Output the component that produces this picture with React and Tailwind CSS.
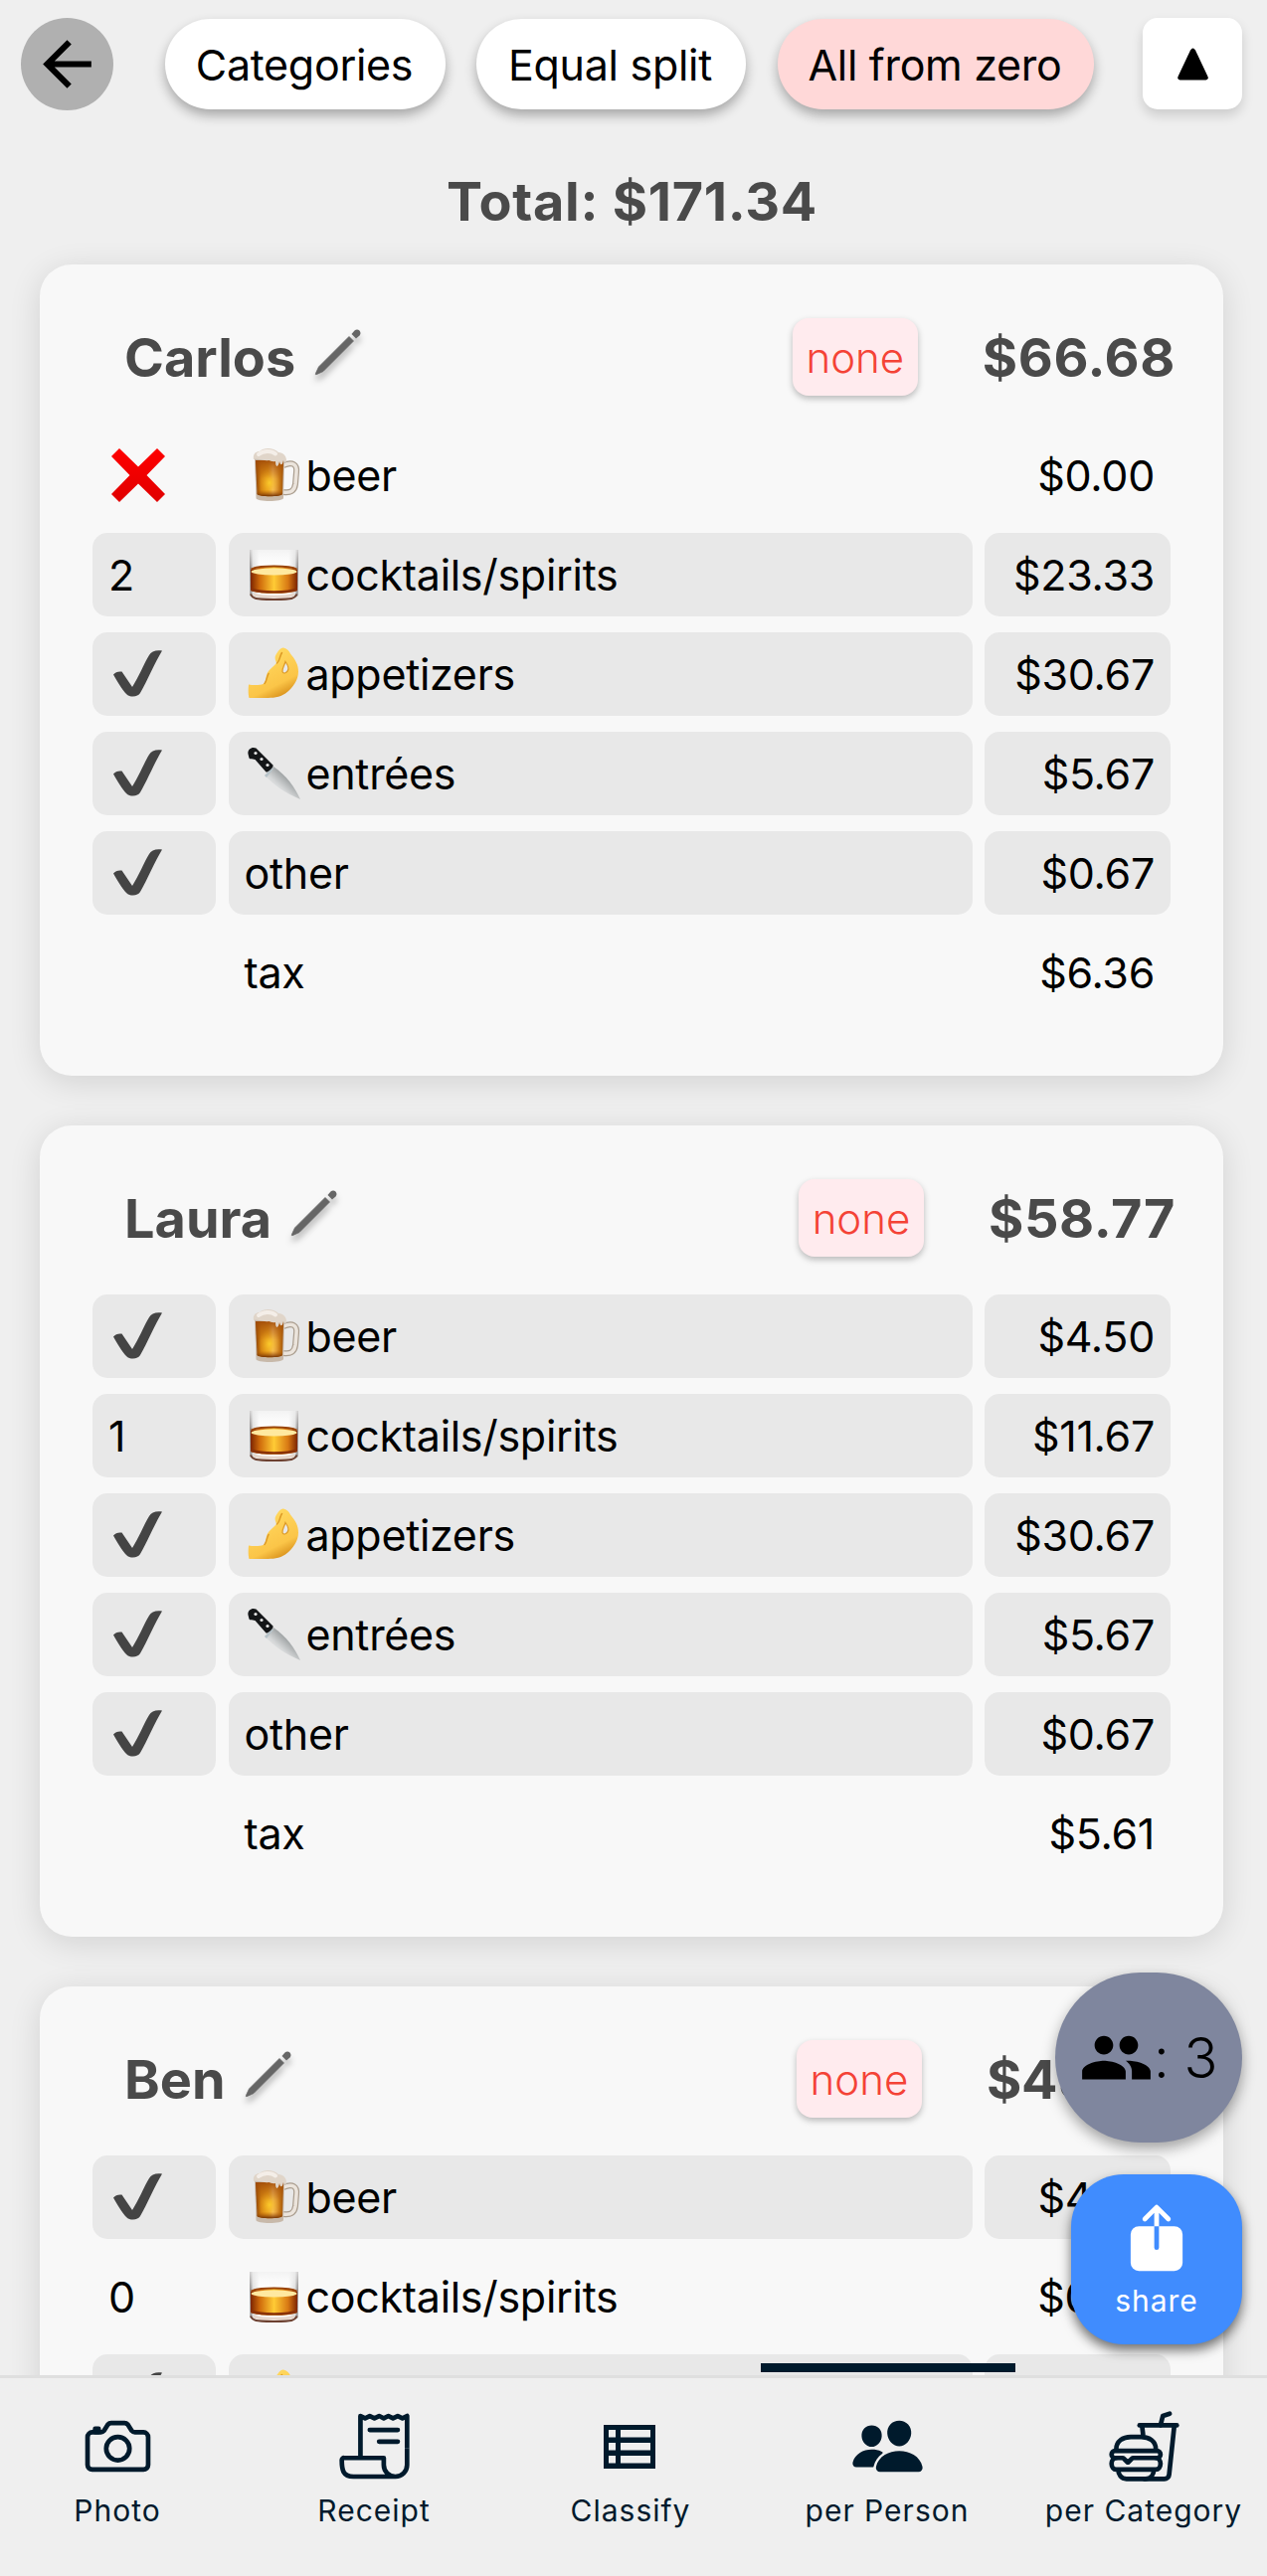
import React from "react";
import { MdArrowBack, MdPeople } from "react-icons/md";
import { IoCameraOutline, IoReceiptOutline, IoPeople, IoFastFoodOutline, IoShare } from "react-icons/io5";

function Beer() {
  return (
    <svg viewBox="0 0 54 54" className="h-[54px] w-[54px]">
      <defs>
        <linearGradient id="beerBody" x1="0" x2="1" y1="0" y2="0">
          <stop offset="0" stopColor="#8a4006" />
          <stop offset=".2" stopColor="#d07f10" />
          <stop offset=".45" stopColor="#e79c1c" />
          <stop offset=".62" stopColor="#f6be68" />
          <stop offset=".85" stopColor="#c97a18" />
          <stop offset="1" stopColor="#a0560c" />
        </linearGradient>
        <radialGradient id="beerGlow" cx=".5" cy=".62" r=".4">
          <stop offset="0" stopColor="#ffd22e" />
          <stop offset="1" stopColor="#f0a51c" stopOpacity="0" />
        </radialGradient>
        <linearGradient id="beerShade" x1="0" x2="0" y1="0" y2="1">
          <stop offset="0" stopColor="#a04a08" stopOpacity=".9" />
          <stop offset=".5" stopColor="#b35d09" stopOpacity=".1" />
          <stop offset=".82" stopColor="#b35d09" stopOpacity="0" />
          <stop offset="1" stopColor="#6a2c04" stopOpacity=".95" />
        </linearGradient>
      </defs>
      <path d="M36 17c9-4 14-1 13 7l-1 12c-1 7-5 9-12 8" fill="none" stroke="#a99c8d" strokeWidth="6" />
      <path d="M36 17c9-4 14-1 13 7l-1 12c-1 7-5 9-12 8" fill="none" stroke="#ebe4dc" strokeWidth="3.600" />
      <path d="M7 10 8.500 50c0 4 27 4 27.500 0L37 10Z" fill="#c8b9aa" />
      <path d="M8 12 9.500 46c1 3 25 3 25.500 0L36 12Z" fill="url(#beerBody)" />
      <path d="M8 12 9.500 46c1 3 25 3 25.500 0L36 12Z" fill="url(#beerGlow)" />
      <path d="M8 12 9.500 46c1 3 25 3 25.500 0L36 12Z" fill="url(#beerShade)" />
      <path d="M6 11C5 6 8 3 12 3c4-4 14-4 19 1 5 0 8 4 8 8 0 3-2 2-3 0-1 5-3 6-4 1-1 6-4 7-4 0-3 1-5-1-7-1-4 1-8-2-15-1Z" fill="#e0d5c9" />
      <path d="M11 6c5-4 13-4 17-.5" fill="none" stroke="#f4eee8" strokeWidth="4" strokeLinecap="round" />
    </svg>
  );
}

function Whisky() {
  return (
    <svg viewBox="0 0 54 54" className="h-[54px] w-[54px]">
      <defs>
        <linearGradient id="whisky" x1="0" x2="1">
          <stop offset="0" stopColor="#7d2500" />
          <stop offset=".2" stopColor="#d06c0c" />
          <stop offset=".5" stopColor="#ffcb35" />
          <stop offset=".8" stopColor="#d87914" />
          <stop offset="1" stopColor="#7d2500" />
        </linearGradient>
        <linearGradient id="glass" x1="0" x2="1">
          <stop offset="0" stopColor="#6f6b6b" />
          <stop offset=".07" stopColor="#dcdcdc" />
          <stop offset=".2" stopColor="#fdfdfd" />
          <stop offset=".8" stopColor="#fdfdfd" />
          <stop offset=".93" stopColor="#dcdcdc" />
          <stop offset="1" stopColor="#6f6b6b" />
        </linearGradient>
        <linearGradient id="glassTop" x1="0" x2="0" y1="0" y2="1">
          <stop offset="0" stopColor="#efefef" stopOpacity=".75" />
          <stop offset=".4" stopColor="#fff" stopOpacity="0" />
        </linearGradient>
      </defs>
      <path d="M2 2h49l-.5 46c-2 5-46 5-48 0Z" fill="url(#glass)" />
      <path d="M2 2h49l-.5 46c-2 5-46 5-48 0Z" fill="url(#glassTop)" />
      <path d="M3 22c9-4 38-4 47 0v21c-7 4-40 4-47 0Z" fill="url(#whisky)" />
      <ellipse cx="26.500" cy="24" rx="23" ry="3.400" fill="#ffe9a0" />
      <path d="M3.500 21.500c7-4 39-4 46 0" fill="none" stroke="#9a4408" strokeWidth="2" />
      <path d="M3.500 41.500c9 4 37 4 46 0" fill="none" stroke="#8a3208" strokeWidth="2.600" />
      <path d="M6 47c9 3 32 3 41 0" fill="none" stroke="#e6d6cb" strokeWidth="3" />
      <path d="M3 46.500c2 5 5 5 23.500 5.500 18-.5 21-.5 23-5.500" fill="none" stroke="#6c4030" strokeWidth="2" />
    </svg>
  );
}

function Hand() {
  return (
    <svg viewBox="0 0 54 54" className="h-[54px] w-[54px]">
      <defs>
        <linearGradient id="skin" x1=".35" x2=".75" y1=".2" y2="1">
          <stop offset="0" stopColor="#ffd65c" />
          <stop offset=".65" stopColor="#fbc548" />
          <stop offset="1" stopColor="#d28713" />
        </linearGradient>
      </defs>
      <path fillRule="evenodd" d="M1 37.500c6 1 12 .5 14.500-.5 3.500-2 2-6 4.500-11.500 1.500-3 6-6 9-9.500-1.500-4-2-6-.5-8.500C30.500 4 33.500 0 36 .5c4 1 6 3.500 7 6 5 6 8 11 8 18 0 8-5 16-13 22-6 4-13 4.500-20 4.500H1.500C.5 48 .5 42 1 37.500ZM38 14.500c-1 4-3.500 7-3 10 1 3 5 1 5.800-2s-.8-5-2.800-8Z" fill="url(#skin)" />
      <path d="M29.500 16c3-2 2.500-7 5-10.500M17 36.500c2-2 2-6 4-10" fill="none" stroke="#dd9a25" strokeWidth="1.500" strokeLinecap="round" />
      <path d="M38 14.500c-1 4-3.500 7-3 10 1 3 5 1 5.800-2s-.8-5-2.800-8Z" fill="none" stroke="#dd9a25" strokeWidth="1.200" />
    </svg>
  );
}

function Knife() {
  return (
    <svg viewBox="0 0 54 54" className="h-[54px] w-[54px]">
      <defs>
        <linearGradient id="blade" x1=".1" x2=".7" y1=".8" y2=".2">
          <stop offset="0" stopColor="#fafafa" />
          <stop offset=".45" stopColor="#d4d6d7" />
          <stop offset="1" stopColor="#858a8b" />
        </linearGradient>
      </defs>
      <path d="M17 29 26 20C39 29 47 40 53 53 38 47 26 38 17 29Z" fill="url(#blade)" />
      <path d="M17 29 24 22 27 21 19 31Z" fill="#b5c2c8" />
      <path d="M.5 7.500C-.5 3 4 -.5 8.500 1.500l17 17c1 2-5 8-7 7L7.500 13c-3-1-5 0-6-1.500Z" fill="#141618" />
      <g fill="#e5e5e5"><circle cx="8" cy="6.500" r="1.600" /><circle cx="14" cy="12.500" r="1.600" /><circle cx="20" cy="18.500" r="1.600" /></g>
    </svg>
  );
}

function Check() {
  return (
    <svg viewBox="0 0 49 47" className="ml-[5px] -mt-[2px] h-[47px] w-[49px]">
      <path d="M0 24.500C2 22 5 21 8.500 21.500L19 37C25 28 31 13 36 5 38 1 43-.5 49 .5 42 12 34 31 27 43c-2 4-10 5-14 1C9 40 3 30 0 24.500Z" fill="#444" />
    </svg>
  );
}

function Cross() {
  return (
    <svg viewBox="0 0 54 54" className="ml-[3px] h-[54px] w-[54px]">
      <defs>
        <linearGradient id="cross" x1="0" x2="0" y1="0" y2="1"><stop offset="0" stopColor="#ff0000" /><stop offset="1" stopColor="#e00000" /></linearGradient>
      </defs>
      <path d="M8 0 27 18.500 46 0 54 8 35.500 27 54 46 46 54 27 35.500 8 54 0 46 18.500 27 0 8Z" fill="url(#cross)" />
    </svg>
  );
}

function Pencil() {
  return (
    <svg viewBox="0 0 46 46" className="-mt-[11px] ml-[20px] h-[46px] w-[46px] overflow-visible drop-shadow-[0_6px_3px_rgba(0,0,0,0.25)]">
      <path d="M34 7.500 38.500 12 8 42.500 1.500 45.500C.5 46 0 45.500.5 44.500L3.500 38Z" fill="#666" stroke="#666" strokeWidth=".8" />
      <path d="M36.500 5 39.500 1.500C43-1.500 47.500 3 44.500 6.500L41 9.500Z" fill="#666" />
    </svg>
  );
}

const categories = [
  ["beer", Beer],
  ["cocktails/spirits", Whisky],
  ["appetizers", Hand],
  ["entrées", Knife],
  ["other", null],
  ["tax", null],
];

const people = [
  { name: "Carlos", total: "$66.68", marks: ["x", "2", "v", "v", "v", ""], prices: ["$0.00", "$23.33", "$30.67", "$5.67", "$0.67", "$6.36"] },
  { name: "Laura", total: "$58.77", marks: ["v", "1", "v", "v", "v", ""], prices: ["$4.50", "$11.67", "$30.67", "$5.67", "$0.67", "$5.61"] },
  { name: "Ben", total: "$45.89", tight: true, marks: ["v", "0", "v"], prices: ["$4.50", "$0.00", "$30.67"] },
];

function Mark({ mark }) {
  if (mark === "v") return <Check />;
  if (mark === "x") return <Cross />;
  return <span>{mark}</span>;
}

function Row({ mark, label, Icon, price }) {
  const active = mark === "v" || mark === "1" || mark === "2";
  const cell = "flex h-[84px] items-center rounded-[15px] px-[16px] " + (active ? "bg-[#e8e8e8]" : "");
  return (
    <div className="grid grid-cols-[124px_748px_187px] gap-x-[12.500px] text-[43px] tracking-[-0.3px] text-black">
      <div className={cell}><Mark mark={mark} /></div>
      <div className={cell}>
        {Icon && <span className="ml-[3px] mr-[5px] shrink-0"><Icon /></span>}
        <span>{label}</span>
      </div>
      <div className={cell + " justify-end"}><span>{price}</span></div>
    </div>
  );
}

function PersonCard({ person }) {
  return (
    <section className="h-[816px] w-[1190px] shrink-0 rounded-[32px] bg-[#f8f8f8] pt-[54px] shadow-[0_6px_32px_rgba(0,0,0,0.12)]">
      <header className="flex h-[78px] items-center pl-[85px] pr-[48px] text-[54px] font-bold text-[#4a4a4a]">
        <span className="mt-[2px]">{person.name}</span>
        <Pencil />
        <span className="ml-auto flex h-[78px] w-[126px] items-center justify-center rounded-[16px] bg-[#ffebee] pt-px text-[42px] font-[350] text-[#f44336] shadow-[0_3px_6px_rgba(0,0,0,0.25)]">none</span>
        <span className={"ml-[65px] mt-[2px] " + (person.tight ? "tracking-[-0.3px]" : "tracking-[0.6px]")}>{person.total}</span>
      </header>
      <div className="mt-[38px] flex flex-col gap-4 pl-[53px]">
        {person.prices.map((price, i) => (
          <Row key={categories[i][0]} mark={person.marks[i]} label={categories[i][0]} Icon={categories[i][1]} price={price} />
        ))}
      </div>
    </section>
  );
}

function ListTable() {
  return (
    <svg viewBox="0 0 52 44" className="mr-[3px] h-[44px] w-[52px]">
      <path fillRule="evenodd" d="M0 0h52v44H0ZM5 5v7.500h7V5Zm12 0v7.500h30V5ZM5 18v7.500h7V18Zm12 0v7.500h30V18ZM5 31v7.500h7V31Zm12 0v7.500h30V31Z" fill="#001a2c" />
    </svg>
  );
}

const tabs = [
  ["Photo", <IoCameraOutline size={75} />],
  ["Receipt", <IoReceiptOutline size={75} />],
  ["Classify", <ListTable />],
  ["per Person", <IoPeople size={75} />],
  ["per Category", <IoFastFoodOutline size={75} />],
];

const pill = "flex h-[91px] items-center justify-center rounded-full pt-px pr-[2px] text-[43px] tracking-[-0.3px] text-black shadow-[0_6px_12px_rgba(0,0,0,0.3)] ";

export default function App() {
  return (
    <div className="relative flex h-[2591px] w-[1274px] flex-col overflow-hidden bg-[#efefef] font-['Inter',sans-serif] leading-none whitespace-nowrap">
      <div className="flex shrink-0 items-start pl-[21px] pt-[18px]">
        <button className="flex size-[93px] items-center justify-center rounded-full bg-[#b0b0b0] text-black"><MdArrowBack size={73} /></button>
        <button className={pill + "ml-[52px] mt-px w-[282px] bg-white"}>Categories</button>
        <button className={pill + "ml-[31px] mt-px w-[271px] bg-white"}>Equal split</button>
        <button className={pill + "ml-[32px] mt-px w-[318px] bg-[#ffd8d8]"}>All from zero</button>
        <button className="ml-[49px] flex h-[92px] w-[100px] items-center justify-center rounded-[15px] bg-white shadow-[0_6px_12px_rgba(0,0,0,0.15)]">
          <svg viewBox="0 0 31 33" className="h-[33px] w-[31px]"><path d="M13 2.500Q15.500-1.500 18 2.500L30.500 29Q31.500 32 28.500 32.500H2.500Q-.5 32 .5 29Z" /></svg>
        </button>
      </div>
      <h1 className="mt-[65px] shrink-0 pr-[3px] text-center text-[54px] font-bold tracking-[0.7px] text-[#4a4a4a]">Total: $171.34</h1>
      <main className="flex h-[2160px] shrink-0 flex-col gap-[50px] overflow-hidden pl-[40px] pt-[36px]">
        {people.map((p) => <PersonCard key={p.name} person={p} />)}
      </main>
      <nav className="absolute inset-x-0 bottom-0 h-[202px] border-t-[3px] border-[#dfdfdf] bg-[#efefef]">
        <div className="-ml-[11px] flex w-[1290px]">
          {tabs.map(([label, icon]) => (
            <div key={label} className="relative flex w-[258px] shrink-0 flex-col items-center text-[#001a2c]">
              {label === "per Person" && <div className="absolute -top-[15px] h-[9px] w-[256px] translate-x-px bg-[#001a2c]" />}
              <div className="mt-[31px] flex h-[75px] items-center">{icon}</div>
              <span className="mt-[12px] text-[30px] tracking-[1px]">{label}</span>
            </div>
          ))}
        </div>
      </nav>
      <div className="absolute left-[1061px] top-[1984px] flex h-[171px] w-[188px] items-center rounded-[86px] bg-[#7f869e] pl-[24px] text-[56px] font-[350] text-black shadow-[0_6px_14px_rgba(0,0,0,0.35)]">
        <MdPeople size={75} className="shrink-0" />
        <span className="tracking-[-0.5px]">: 3</span>
      </div>
      <button className="absolute left-[1077px] top-[2187px] flex h-[171px] w-[172px] flex-col items-center rounded-[53px] bg-[#408cfe] pt-[26px] text-white shadow-[0_6px_12px_rgba(0,0,0,0.55)]">
        <IoShare size={76} />
        <span className="mt-[10px] text-[30px] tracking-[1px]">share</span>
      </button>
    </div>
  );
}
